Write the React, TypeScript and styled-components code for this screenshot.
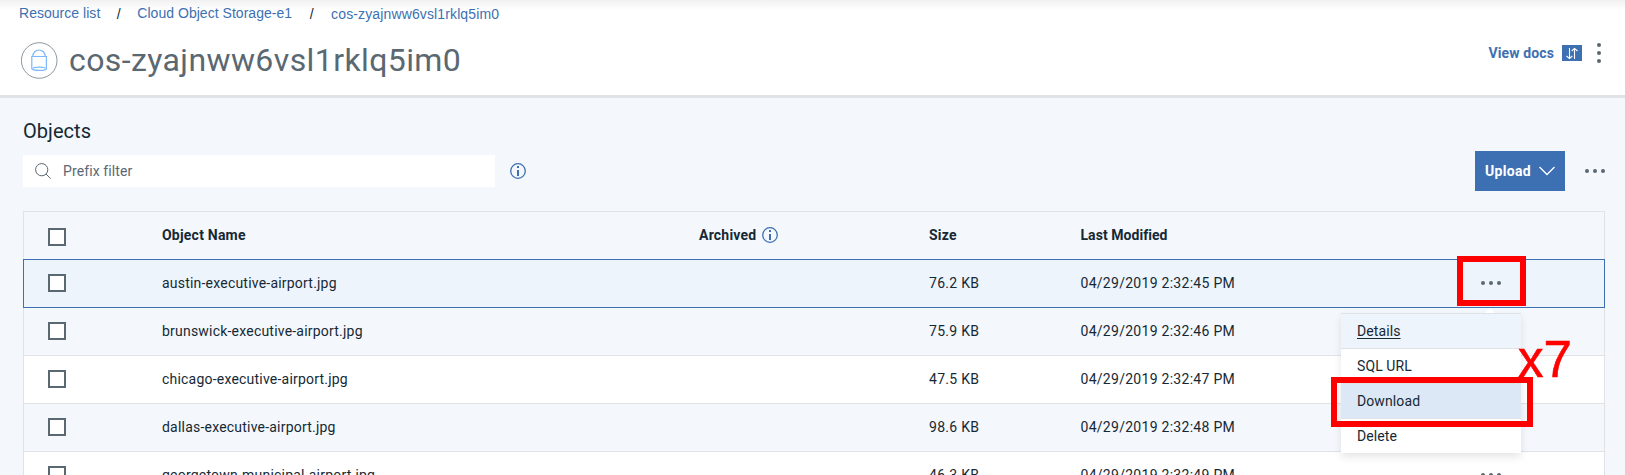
import React from 'react';
import styled, { createGlobalStyle } from 'styled-components';

const GlobalStyle = createGlobalStyle`
  *, *::before, *::after { box-sizing: border-box; }
  body {
    margin: 0;
    background: #f4f7fb;
    color: #152935;
    font: 14px/20px Roboto, "Liberation Sans", sans-serif;
    letter-spacing: 0.2px;
  }
  svg { flex: none; }
`;

const Page = styled.div`
  position: relative;
  height: 475px;
  overflow: hidden;
`;

const Header = styled.header`
  height: 98px;
  padding: 3px 24px 0 19px;
  border-bottom: 3px solid #dfe3e6;
  background: linear-gradient(#f1f1f1, #fff 10px);
`;

const Breadcrumb = styled.nav`
  display: flex;
  height: 20px;
  font-family: "Liberation Sans", Arial, sans-serif;
  letter-spacing: 0;
`;

const Crumb = styled.a<{ $current?: boolean }>`
  color: #3d70b2;
  padding-top: ${(p) => (p.$current ? 1 : 0)}px;
  letter-spacing: ${(p) => (p.$current ? 0.13 : 0.03)}px;
  white-space: nowrap;
`;

const Slash = styled.span`
  width: 37px;
  padding-top: 1px;
  text-align: center;
  color: #152935;

  &:nth-of-type(2) {
    width: 39px;
  }
`;

const TitleBar = styled.div`
  display: flex;
  justify-content: space-between;
`;

const TitleGroup = styled.div`
  display: flex;
  align-items: center;
  gap: 11px;
  height: 38px;
  margin: 18px 0 0 2px;
`;

const Title = styled.h1`
  margin: 0;
  color: #5a6872;
  font-size: 32px;
  line-height: 38px;
  font-weight: 400;
  letter-spacing: 0.4px;
`;

const HeaderLinks = styled.div`
  display: flex;
  align-items: center;
  height: 24px;
  margin-top: 18px;
`;

const DocsLink = styled.a`
  margin-right: 8px;
  color: #3d70b2;
  font-weight: 700;
  letter-spacing: 0.12px;
`;

const SwitchButton = styled.button`
  display: flex;
  width: 20px;
  height: 16px;
  margin-right: 15px;
  padding: 0;
  border: 0;
  background: #3d70b2;
`;

const Main = styled.main`
  padding: 23px 20px 0 23px;
`;

const SectionTitle = styled.h2`
  margin: 0;
  height: 30px;
  font-size: 20px;
  line-height: 20px;
  font-weight: 400;
  letter-spacing: 0.04px;
`;

const Toolbar = styled.div`
  display: flex;
  align-items: center;
  height: 40px;
`;

const SearchBox = styled.div`
  display: flex;
  align-items: center;
  gap: 12px;
  width: 472px;
  height: 32px;
  margin-right: 15px;
  padding-left: 12px;
  background: #fff;
  color: #5a6872;
  letter-spacing: 0.1px;
`;

const UploadButton = styled.button`
  display: flex;
  align-items: center;
  justify-content: space-between;
  width: 90px;
  height: 40px;
  margin: 0 20px 0 auto;
  padding: 0 10px;
  border: 0;
  background: #3d70b2;
  color: #fff;
  font: 700 14px/20px Roboto, sans-serif;
  letter-spacing: 0.3px;
`;

const Table = styled.div`
  margin-top: 20px;
  border: 1px solid #dfe3e6;
  border-bottom: 0;
`;

const Row = styled.div<{ $tone: 'plain' | 'shaded' | 'selected' }>`
  position: relative;
  display: grid;
  grid-template-columns: 114px 537px 230px 151.5px 400.5px 1fr;
  align-items: center;
  height: 48px;
  padding-left: 24px;
  border-bottom: 1px solid #dfe3e6;
  background: ${(p) => (p.$tone === 'plain' ? '#fff' : '#f4f7fb')};
  ${(p) =>
    p.$tone === 'selected' &&
    `
    height: 49px;
    margin: -1px -1px 0;
    border: 1px solid #3d70b2;
    background: #edf4fc;
  `}
`;

const Cell = styled.span<{ $wide?: boolean }>`
  margin-bottom: 2px;
  letter-spacing: ${(p) => (p.$wide ? 0.28 : 0.21)}px;
`;

const HeadRow = styled(Row)`
  font-weight: 700;
`;

const Checkbox = styled.span<{ $head?: boolean }>`
  width: 18px;
  height: 18px;
  margin-top: ${(p) => (p.$head ? 3 : -1)}px;
  border: 2px solid #5a6872;
  background: #fff;
`;

const HeadCell = styled.span<{ $tight?: boolean }>`
  display: flex;
  align-items: center;
  gap: 6px;
  margin-bottom: 2px;
  letter-spacing: ${(p) => (p.$tight ? 0.05 : 0.22)}px;
`;

const MoreCell = styled.span`
  display: flex;
  margin-bottom: 1px;
`;

const Menu = styled.div`
  position: absolute;
  top: 313px;
  left: 1341px;
  width: 180px;
  background: #fff;
  box-shadow: 0 4px 8px rgba(0, 0, 0, 0.1);

  &::before {
    content: '';
    position: absolute;
    left: 144px;
    top: -5px;
    border: 5px solid transparent;
    border-top: 0;
    border-bottom-color: #fff;
  }
`;

const MenuItem = styled.div<{ $state?: 'focused' | 'hovered' }>`
  height: 35px;
  padding: 7px 16px 0;
  border-top: 1px solid #dfe3e6;
  letter-spacing: 0.1px;
  background: ${(p) =>
    p.$state === 'focused' ? '#edf4fc' : p.$state === 'hovered' ? '#dde8f6' : '#fff'};
  text-decoration: ${(p) => (p.$state === 'focused' ? 'underline' : 'none')};
  text-underline-offset: 2px;
`;

const Highlight = styled.div<{ $target: 'more' | 'download' }>`
  position: absolute;
  border: 6px solid #f00;
  ${(p) =>
    p.$target === 'more'
      ? 'left: 1457px; top: 256px; width: 69px; height: 50px;'
      : 'left: 1331px; top: 377px; width: 202px; height: 50px;'}
`;

const RepeatNote = styled.div`
  position: absolute;
  left: 1518px;
  top: 332px;
  color: #f00;
  font: 51px/56px "Liberation Sans", Arial, sans-serif;
  letter-spacing: 0;
  -webkit-text-stroke: 0.6px #f00;
`;

const BucketIcon = () => (
  <svg width="37" height="37" viewBox="0 0 37 37" fill="none">
    <circle cx="18.2" cy="18.5" r="17.8" stroke="#7f8b94" strokeWidth="0.9" />
    <g stroke="#7cb8fb" strokeWidth="1.2">
      <path d="M11.8 14.500c0-4 2.800-6.500 6.200-6.500s6.200 2.500 6.200 6.500" />
      <path d="M10.800 14.500h14.600v12.200c0 .9-3.300 1.700-7.300 1.700s-7.300-.8-7.300-1.700z" />
      <path d="M12 26.700c0-.9 2.800-1.600 6.100-1.600s6.100.7 6.100 1.600" />
    </g>
  </svg>
);

const SwitchIcon = () => (
  <svg width="20" height="16" viewBox="0 0 20 16" fill="none" stroke="#fff" strokeWidth="1.1">
    <path d="M7.500 3v10.500M4.500 11l3 2.600 2.800-2.600M12.500 14V3.400M9.700 6l2.800-2.600L15.500 6" />
  </svg>
);

const SearchIcon = () => (
  <svg width="16" height="16" viewBox="0 0 16 16" fill="none" stroke="#5a6872">
    <circle cx="6.700" cy="6.700" r="6.100" />
    <path d="M11 11l4.700 4.700" />
  </svg>
);

const InfoIcon = () => (
  <svg width="16" height="16" viewBox="0 0 16 16" fill="none" stroke="#3d70b2">
    <circle cx="8" cy="8" r="7.300" strokeWidth="1.300" />
    <path d="M8 3v2M8 7v6" strokeWidth="2" />
  </svg>
);

const ChevronIcon = () => (
  <svg width="16" height="10" viewBox="0 0 16 10" fill="none" stroke="#fff" strokeWidth="1.300">
    <path d="M.5 1L8 8.500 15.500 1" />
  </svg>
);

const MoreIcon = ({ vertical = false }: { vertical?: boolean }) => (
  <svg width={vertical ? 4 : 20} height={vertical ? 20 : 4} fill="#5a6872">
    {[2, 10, 18].map((p) => (
      <circle key={p} cx={vertical ? 2 : p} cy={vertical ? p : 2} r="2" />
    ))}
  </svg>
);

const objects = [
  { name: 'austin-executive-airport.jpg', size: '76.2 KB', modified: '04/29/2019 2:32:45 PM' },
  { name: 'brunswick-executive-airport.jpg', size: '75.9 KB', modified: '04/29/2019 2:32:46 PM' },
  { name: 'chicago-executive-airport.jpg', size: '47.5 KB', modified: '04/29/2019 2:32:47 PM' },
  { name: 'dallas-executive-airport.jpg', size: '98.6 KB', modified: '04/29/2019 2:32:48 PM' },
  { name: 'georgetown-municipal-airport.jpg', size: '46.3 KB', modified: '04/29/2019 2:32:49 PM' },
];

export default function App() {
  return (
    <Page>
      <GlobalStyle />
      <Header>
        <Breadcrumb>
          <Crumb>Resource list</Crumb>
          <Slash>/</Slash>
          <Crumb>Cloud Object Storage-e1</Crumb>
          <Slash>/</Slash>
          <Crumb $current>cos-zyajnww6vsl1rklq5im0</Crumb>
        </Breadcrumb>
        <TitleBar>
          <TitleGroup>
            <BucketIcon />
            <Title>cos-zyajnww6vsl1rklq5im0</Title>
          </TitleGroup>
          <HeaderLinks>
            <DocsLink>View docs</DocsLink>
            <SwitchButton aria-label="Switch">
              <SwitchIcon />
            </SwitchButton>
            <MoreIcon vertical />
          </HeaderLinks>
        </TitleBar>
      </Header>
      <Main>
        <SectionTitle>Objects</SectionTitle>
        <Toolbar>
          <SearchBox>
            <SearchIcon />
            Prefix filter
          </SearchBox>
          <InfoIcon />
          <UploadButton>
            Upload
            <ChevronIcon />
          </UploadButton>
          <MoreIcon />
        </Toolbar>
        <Table>
          <HeadRow $tone="shaded">
            <Checkbox $head />
            <HeadCell>Object Name</HeadCell>
            <HeadCell>
              Archived
              <InfoIcon />
            </HeadCell>
            <HeadCell>Size</HeadCell>
            <HeadCell $tight>Last Modified</HeadCell>
          </HeadRow>
          {objects.map((o, i) => (
            <Row key={o.name} $tone={i === 0 ? 'selected' : i % 2 ? 'shaded' : 'plain'}>
              <Checkbox />
              <Cell>{o.name}</Cell>
              <span />
              <Cell $wide>{o.size}</Cell>
              <Cell $wide>{o.modified}</Cell>
              <MoreCell>
                <MoreIcon />
              </MoreCell>
            </Row>
          ))}
        </Table>
      </Main>
      <Menu>
        <MenuItem $state="focused">Details</MenuItem>
        <MenuItem>SQL URL</MenuItem>
        <MenuItem $state="hovered">Download</MenuItem>
        <MenuItem>Delete</MenuItem>
      </Menu>
      <Highlight $target="more" />
      <Highlight $target="download" />
      <RepeatNote>x7</RepeatNote>
    </Page>
  );
}
